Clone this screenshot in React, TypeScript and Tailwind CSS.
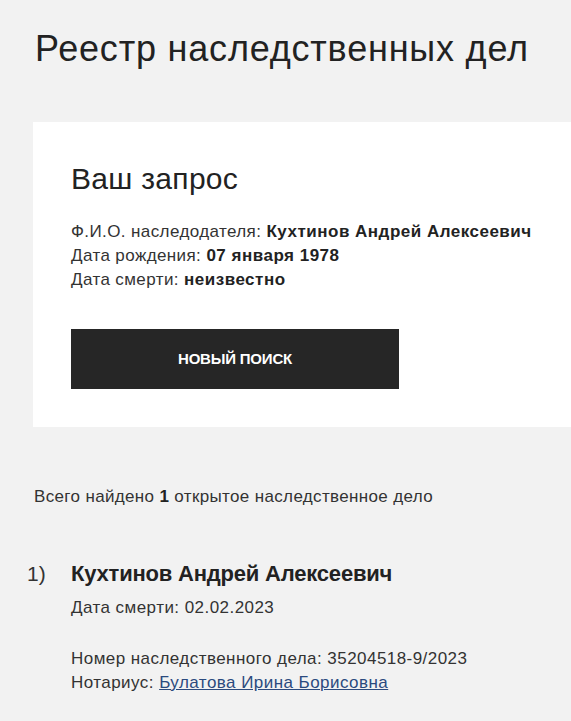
import React from "react";

export default function App() {
  return (
    <div className="min-h-[721px] bg-[#f2f2f2] text-[#222222] overflow-hidden" style={{ fontFamily: '"Liberation Sans", Arial, sans-serif' }}>
      <div className="pl-[35px] pt-[29px]">
        <h1 className="text-[36px] leading-[40px] font-normal tracking-[0.8px]">Реестр наследственных дел</h1>
      </div>
      <div className="ml-[33px] mt-[53px] bg-white pl-[38px] pt-[40px] pb-[38px]">
        <h2 className="text-[30px] leading-[34px] tracking-[0.3px]">Ваш запрос</h2>
        <div className="mt-[24px] text-[17px] leading-[24px] text-[#333333] tracking-[0.4px]">
          <div>Ф.И.О. наследодателя: <b className="text-[#222222] tracking-[0.5px]">Кухтинов Андрей Алексеевич</b></div>
          <div>Дата рождения: <b className="text-[#222222] tracking-[0.5px]">07 января 1978</b></div>
          <div>Дата смерти: <b className="text-[#222222] tracking-[0.5px]">неизвестно</b></div>
        </div>
        <button className="mt-[37px] w-[328px] h-[60px] bg-[#262626] text-white text-[15px] font-bold tracking-[-0.2px]">НОВЫЙ ПОИСК</button>
      </div>
      <div className="pl-[34px] mt-[59px] text-[17px] leading-[22px] text-[#333333] tracking-[0.35px]">
        Всего найдено <b className="text-[#222222]">1</b> открытое наследственное дело
      </div>
      <div className="flex mt-[53px] pl-[27px]">
        <div className="w-[44px] text-[21px] leading-[26px] text-[#333333]">1)</div>
        <div>
          <div className="text-[22px] leading-[26px] font-bold tracking-[-0.2px]">Кухтинов Андрей Алексеевич</div>
          <div className="mt-[9px] text-[17px] leading-[24px] text-[#333333] tracking-[0.45px]">Дата смерти: 02.02.2023</div>
          <div className="mt-[27px] text-[17px] leading-[24px] text-[#333333] tracking-[0.45px]">
            <div>Номер наследственного дела: 35204518-9/2023</div>
            <div>Нотариус: <a href="#" className="text-[#2b4a7e] underline">Булатова Ирина Борисовна</a></div>
          </div>
        </div>
      </div>
    </div>
  );
}
